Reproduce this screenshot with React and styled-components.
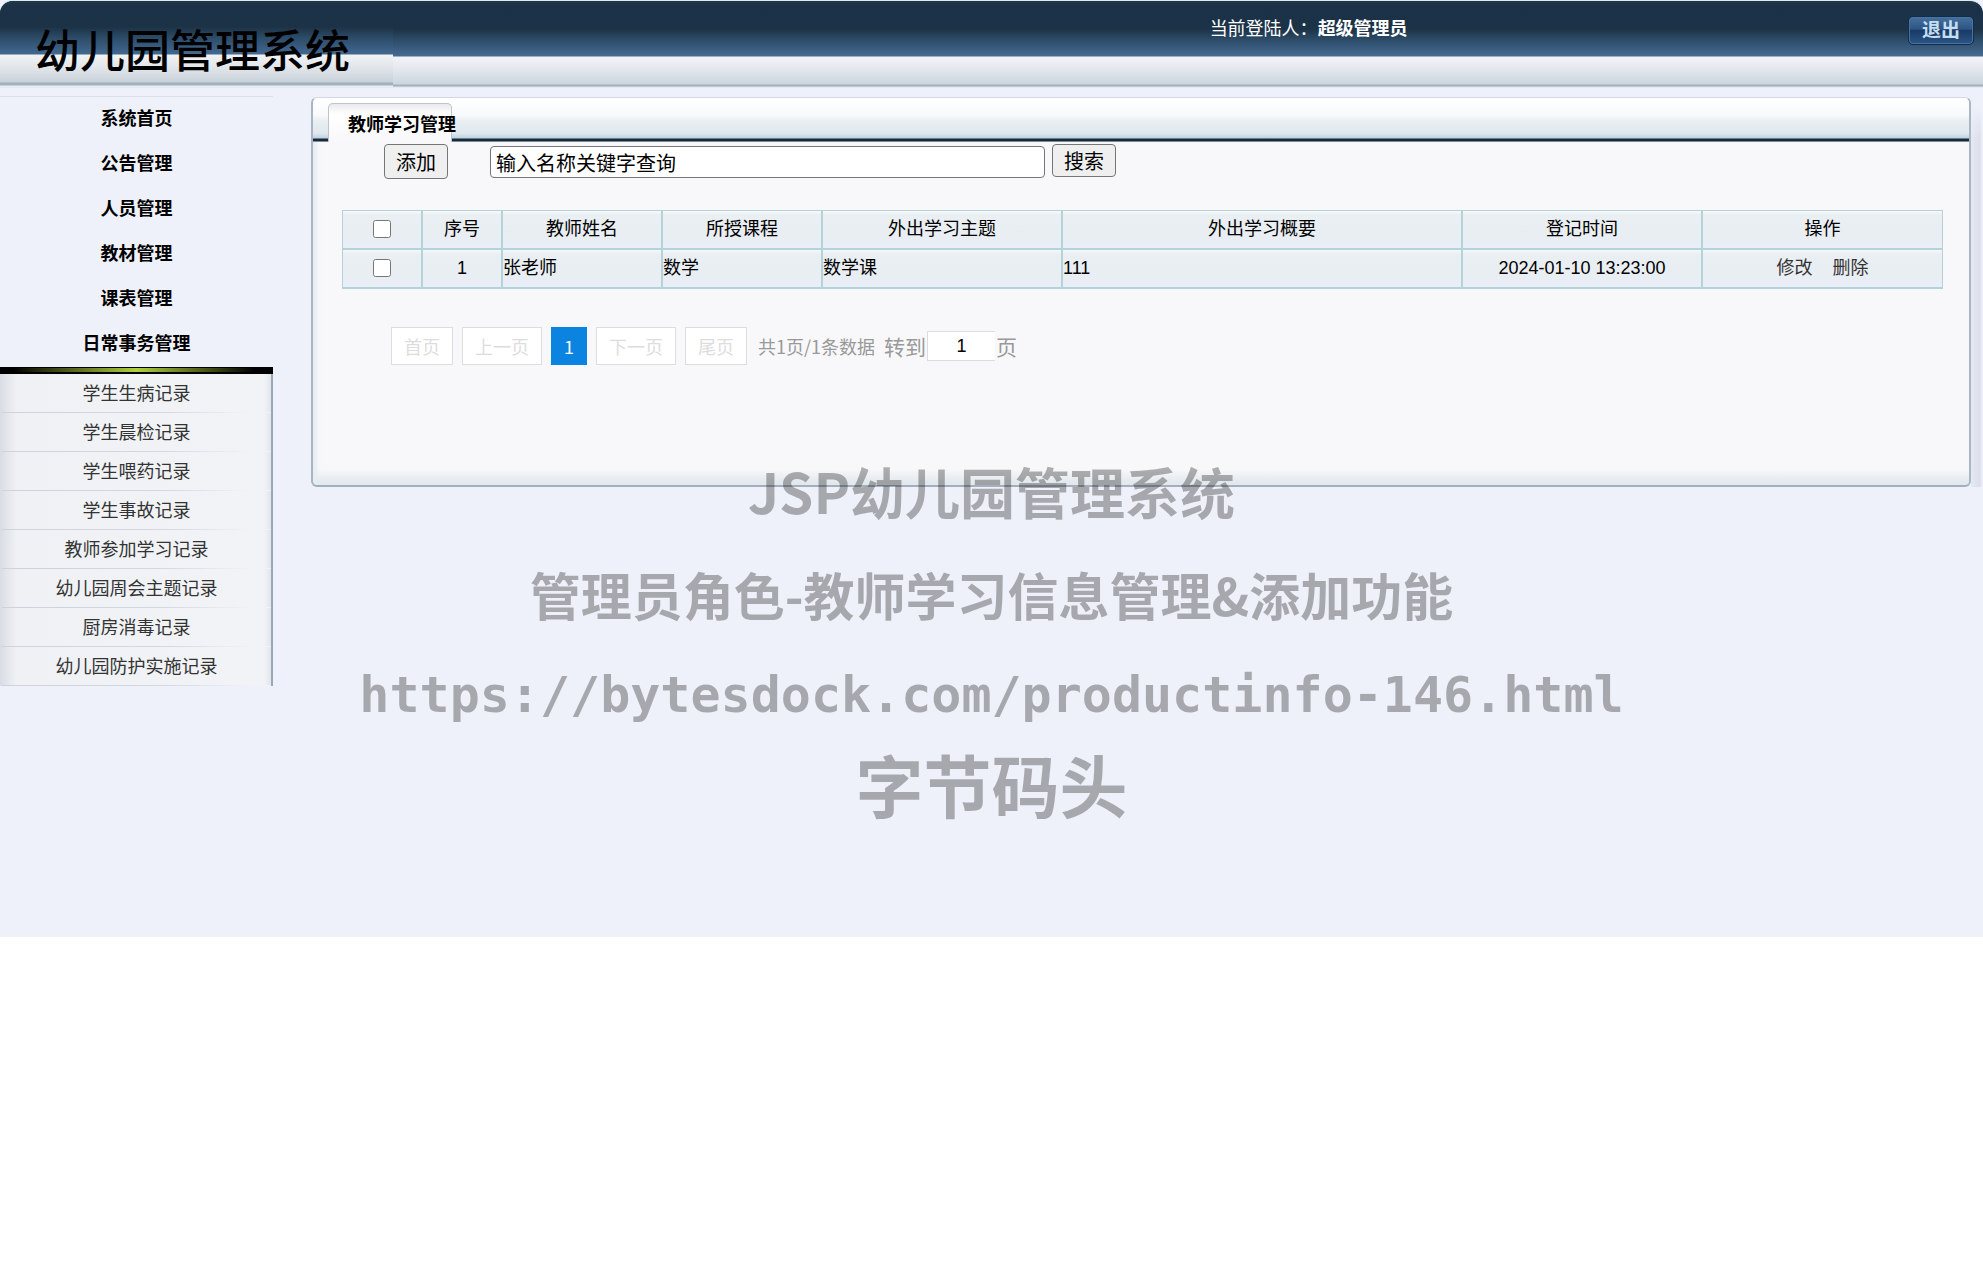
import React from "react";
import styled, { createGlobalStyle } from "styled-components";

const GlobalStyle = createGlobalStyle`
  * {
    box-sizing: border-box;
  }
  body {
    margin: 0;
    background: #ffffff;
    color: #000000;
    font-family: "Liberation Sans", "Noto Sans CJK SC", sans-serif;
    font-size: 18px;
  }
  a {
    color: inherit;
    text-decoration: none;
  }
`;

const Page = styled.div`
  position: relative;
  min-height: 937px;
  background: #eef1fa;
`;

const Header = styled.header`
  display: grid;
  grid-template-columns: 61% 1fr auto;
  align-items: start;
  height: 88px;
  border-top: 1px solid #d8eaf5;
  border-radius: 13px 13px 0 0;
  background: linear-gradient(
    #1f3744 0,
    #1b3148 6px,
    #1c3246 28px,
    #2b4a66 38px,
    #466a92 55px,
    #f4f2f8 56px,
    #e4e8ee 68px,
    #cbd6de 83px,
    #a3b1b9 84px,
    #a3b1b9 85px,
    #d8e2ec 86px,
    #eef1fa 87px
  );
`;

const Logo = styled.h1`
  width: 393px;
  height: 86px;
  margin: 0;
  padding: 20px 0 0 35px;
  border-top-left-radius: 13px;
  background: linear-gradient(
    #1f3744 0,
    #1b3148 6px,
    #1c3246 26px,
    #2b4a66 36px,
    #426890 53px,
    #f2f2f3 54px,
    #e2e6ea 66px,
    #c8d2da 81px,
    #a3b1b9 82px,
    #a3b1b9 84px,
    #e8eef6 85px
  );
  font-size: 45px;
  font-weight: 500;
  line-height: 64px;
`;

const CurrentUser = styled.div`
  padding-top: 14px;
  color: #ffffff;
  line-height: 29px;
`;

const LogoutButton = styled.button`
  width: 66px;
  height: 29px;
  margin: 15px 9px 0 0;
  padding: 0;
  border: 1px solid #122c4c;
  border-radius: 5px;
  background: linear-gradient(#45709d, #2d5583 45%, #183b67 50%, #2b5587);
  box-shadow: inset 0 0 0 1px #4974a0;
  color: #c5dff2;
  font-family: inherit;
  font-size: 19px;
  font-weight: bold;
  line-height: 26px;
`;

const Main = styled.main`
  display: flex;
  align-items: flex-start;
`;

const Sidebar = styled.nav`
  flex: none;
  width: 273px;
  margin-right: 38px;
  padding-top: 8px;
`;

const MenuList = styled.ul`
  margin: 0;
  padding: 0;
  border-top: 1px solid #dce0ea;
  list-style: none;
  text-align: center;
`;

const MenuItem = styled.li`
  height: 45px;
  font-weight: bold;
  line-height: 45px;
`;

const SubMenu = styled.ul`
  margin: 0;
  padding: 0 0 0 2px;
  border-right: 2px solid #9ba8b5;
  background: linear-gradient(
    90deg,
    #d9dce4,
    #eff1f4 16px,
    #f1f3f6 264px,
    #e1e6ec
  );
  list-style: none;
  text-align: center;
`;

const SubMenuBar = styled.div`
  height: 7px;
  border: solid #000000;
  border-width: 1px 0 2px;
  background: linear-gradient(90deg, #000000 5%, #b0d03c 50%, #000000 93%);
`;

const SubMenuItem = styled.li`
  height: 39px;
  border-bottom: 1px solid;
  border-image: linear-gradient(90deg, #cdd2dc, #d3d7e0 60%, #f1f3f6 92%) 1;
  color: #333333;
  line-height: 41px;
`;

const Content = styled.div`
  display: flex;
  flex: 1;
  min-width: 0;
  padding-top: 9px;
`;

const Panel = styled.section`
  flex: 1;
  min-width: 0;
  min-height: 390px;
  border: 1px solid #d3d7e0;
  border-right: 2px solid #a9b7c3;
  border-bottom: 2px solid #a3afba;
  border-left: 2px solid #a9b5c2;
  border-radius: 6px;
  background: linear-gradient(#f8f8fa calc(100% - 16px), #dfe5ea);
  box-shadow: inset 4px 0 4px #e6edf3;
`;

const PanelShade = styled.div`
  flex: none;
  width: 12px;
  background: linear-gradient(90deg, #e5e9f4, #dcdfea 70%, #eef1fa);
  mask-image: linear-gradient(transparent 10px, #000000 40px);
`;

const PanelHead = styled.div`
  display: flex;
  align-items: flex-end;
  height: 44px;
  padding-left: 15px;
  border-radius: 5px 5px 0 0;
  background: linear-gradient(
    #ffffff,
    #f8fafb 17px,
    #e8eef2 23px,
    #e1e9ef 35px,
    #c1d2de 40px,
    #152b3c 41px,
    #152b3c 43px,
    #e3e9ee 44px
  );
`;

const PanelTab = styled.h2`
  width: 124px;
  height: 39px;
  margin: 0;
  padding-left: 19px;
  border: 1px solid #c0c3c8;
  border-bottom: 0;
  border-radius: 5px 5px 0 0;
  background: linear-gradient(#e9eaed, #ffffff 10px, #f8f8fa);
  font-size: 18px;
  font-weight: bold;
  line-height: 43px;
  white-space: nowrap;
`;

const PanelBody = styled.div`
  padding: 2px 26px 0 29px;
`;

const Toolbar = styled.div`
  display: flex;
  align-items: flex-start;
  padding-left: 42px;
`;

const Button = styled.button`
  height: ${(props) => (props.$tall ? "35px" : "33px")};
  padding: 2px 11px 0;
  border: 1px solid #767676;
  border-radius: 4px;
  background: #efefef;
  color: #000000;
  font-family: inherit;
  font-size: 20px;
  line-height: 28px;
`;

const SearchForm = styled.form`
  display: flex;
  flex: 1;
  align-items: flex-start;
  gap: 7px;
  margin-left: 42px;
`;

const SearchInput = styled.input`
  width: 555px;
  height: 32px;
  margin-top: 2px;
  padding: 0 5px;
  border: 1px solid #767676;
  border-radius: 4px;
  background: #ffffff;
  color: #000000;
  font-family: inherit;
  font-size: 20px;
`;

const Table = styled.table`
  width: 100%;
  margin-top: 31px;
  border-collapse: separate;
  border-spacing: 0;
  table-layout: fixed;
  border: solid #b3d3d8;
  border-width: 0 0 1px 1px;
`;

const Col = styled.col`
  width: ${(props) => props.$width};
`;

const cell = `
  height: 39px;
  padding: 0;
  border: solid #b3d3d8;
  border-width: 1px 2px 1px 0;
  background: linear-gradient(#f6f9fb, #eaeff3 4px, #e9eef2 20px, #e9eef8);
  font-weight: normal;
  line-height: 35px;
  &:last-child {
    border-right-width: 1px;
  }
`;

const HeadCell = styled.th`
  ${cell}
  text-align: center;
`;

const BodyCell = styled.td`
  ${cell}
  text-align: ${(props) => props.$align || "center"};
`;

const Checkbox = styled.input`
  width: 18px;
  height: 18px;
  margin: 0 0 2px;
  vertical-align: middle;
`;

const RowLink = styled.a`
  margin: 0 10px;
  color: #333333;
`;

const Pagination = styled.div`
  display: flex;
  align-items: center;
  margin-top: 38px;
  padding-left: 49px;
  color: #999999;
  font-family: "Noto Sans CJK SC", sans-serif;
`;

const PageButton = styled.button`
  height: 38px;
  margin-right: 9px;
  padding: 0 12px;
  border: 1px solid ${(props) => (props.$active ? "#0a84e0" : "#dddddd")};
  background: ${(props) => (props.$active ? "#0a84e0" : "#ffffff")};
  color: ${(props) => (props.$active ? "#ffffff" : "#dddddd")};
  font-family: inherit;
  font-size: 18px;
  line-height: 36px;
`;

const PageSummary = styled.span`
  margin: 0 9px 0 2px;
`;

const JumpLabel = styled.label`
  display: flex;
  align-items: center;
  font-size: 21px;
`;

const JumpInput = styled.input`
  width: 68px;
  height: 30px;
  margin: 0 1px;
  padding: 0;
  border: 1px solid #dddddd;
  border-right: 0;
  background: #ffffff;
  color: #000000;
  font-family: "Liberation Sans", sans-serif;
  font-size: 18px;
  text-align: center;
`;

// Lies over the whole page and lets clicks through
const Watermark = styled.div`
  position: absolute;
  top: 438px;
  right: 0;
  left: 0;
  color: rgba(0, 0, 0, 0.3);
  font-family: "Noto Sans CJK SC", sans-serif;
  font-weight: bold;
  text-align: center;
  white-space: nowrap;
  pointer-events: none;
`;

const WatermarkLine = styled.div`
  font-size: ${(props) => props.$size};
  line-height: ${(props) => props.$height};
`;

const WatermarkUrl = styled(WatermarkLine)`
  font-family: "DejaVu Sans Mono", monospace;
`;

const menu = [
  "系统首页",
  "公告管理",
  "人员管理",
  "教材管理",
  "课表管理",
  "日常事务管理",
];

const subMenu = [
  "学生生病记录",
  "学生晨检记录",
  "学生喂药记录",
  "学生事故记录",
  "教师参加学习记录",
  "幼儿园周会主题记录",
  "厨房消毒记录",
  "幼儿园防护实施记录",
];

const columns = [
  { title: "序号", width: "5%" },
  { title: "教师姓名", width: "10%" },
  { title: "所授课程", width: "10%" },
  { title: "外出学习主题", width: "15%" },
  { title: "外出学习概要", width: "25%" },
  { title: "登记时间", width: "15%" },
  { title: "操作", width: "15%" },
];

const rows = [
  {
    id: 1,
    teacher: "张老师",
    course: "数学",
    subject: "数学课",
    summary: "111",
    time: "2024-01-10 13:23:00",
  },
];

function App() {
  return (
    <Page>
      <GlobalStyle />
      <Header>
        <Logo>幼儿园管理系统</Logo>
        <CurrentUser>
          当前登陆人：<strong>超级管理员</strong>
        </CurrentUser>
        <LogoutButton type="button">退出</LogoutButton>
      </Header>

      <Main>
        <Sidebar>
          <MenuList>
            {menu.map((title) => (
              <MenuItem key={title}>
                <a href="#">{title}</a>
              </MenuItem>
            ))}
          </MenuList>
          <SubMenuBar />
          <SubMenu>
            {subMenu.map((title) => (
              <SubMenuItem key={title}>
                <a href="#">{title}</a>
              </SubMenuItem>
            ))}
          </SubMenu>
        </Sidebar>

        <Content>
          <Panel>
            <PanelHead>
              <PanelTab>教师学习管理</PanelTab>
            </PanelHead>
            <PanelBody>
              <Toolbar>
                <Button type="button" $tall>
                  添加
                </Button>
                <SearchForm>
                  <SearchInput
                    type="text"
                    aria-label="名称关键字"
                    defaultValue="输入名称关键字查询"
                  />
                  <Button type="button">搜索</Button>
                </SearchForm>
              </Toolbar>

              <Table>
                <colgroup>
                  <Col $width="5%" />
                  {columns.map((column) => (
                    <Col key={column.title} $width={column.width} />
                  ))}
                </colgroup>
                <thead>
                  <tr>
                    <HeadCell>
                      <Checkbox type="checkbox" aria-label="全选" />
                    </HeadCell>
                    {columns.map((column) => (
                      <HeadCell key={column.title}>{column.title}</HeadCell>
                    ))}
                  </tr>
                </thead>
                <tbody>
                  {rows.map((row) => (
                    <tr key={row.id}>
                      <BodyCell>
                        <Checkbox type="checkbox" aria-label={row.teacher} />
                      </BodyCell>
                      <BodyCell>{row.id}</BodyCell>
                      <BodyCell $align="left">{row.teacher}</BodyCell>
                      <BodyCell $align="left">{row.course}</BodyCell>
                      <BodyCell $align="left">{row.subject}</BodyCell>
                      <BodyCell $align="left">{row.summary}</BodyCell>
                      <BodyCell>{row.time}</BodyCell>
                      <BodyCell>
                        <RowLink href="#">修改</RowLink>
                        <RowLink href="#">删除</RowLink>
                      </BodyCell>
                    </tr>
                  ))}
                </tbody>
              </Table>

              <Pagination>
                <PageButton type="button">首页</PageButton>
                <PageButton type="button">上一页</PageButton>
                <PageButton type="button" $active>
                  1
                </PageButton>
                <PageButton type="button">下一页</PageButton>
                <PageButton type="button">尾页</PageButton>
                <PageSummary>共1页/1条数据</PageSummary>
                <JumpLabel>
                  转到
                  <JumpInput type="text" defaultValue="1" />页
                </JumpLabel>
              </Pagination>
            </PanelBody>
          </Panel>
          <PanelShade />
        </Content>
      </Main>

      <Watermark>
        <WatermarkLine $size="55px" $height="104px">
          JSP幼儿园管理系统
        </WatermarkLine>
        <WatermarkLine $size="51px" $height="104px">
          管理员角色-教师学习信息管理&amp;添加功能
        </WatermarkLine>
        <WatermarkUrl $size="50px" $height="98px">
          https://bytesdock.com/productinfo-146.html
        </WatermarkUrl>
        <WatermarkLine $size="68px" $height="80px">
          字节码头
        </WatermarkLine>
      </Watermark>
    </Page>
  );
}

export default App;
